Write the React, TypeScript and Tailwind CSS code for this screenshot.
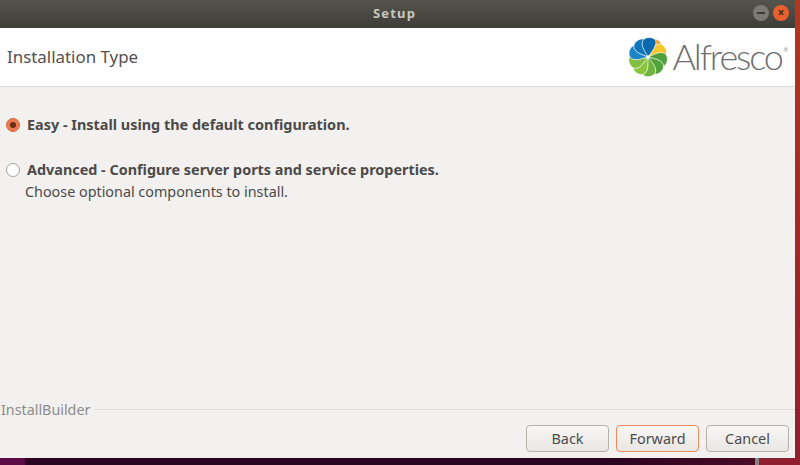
import React from "react"

const petals = [
  { angle: 28, color: "#f39a21" },
  { angle: 62, color: "#f9c52e" },
  { angle: 100, color: "#4f9f3a" },
  { angle: 138, color: "#52a23a" },
  { angle: 176, color: "#6fb43c" },
  { angle: 214, color: "#8cc540" },
  { angle: 250, color: "#82bf3e" },
  { angle: 288, color: "#1a86c8" },
  { angle: 326, color: "#0f76bc" },
  { angle: 364, color: "#0b69ae" },
]

function Flower() {
  return (
    <svg width="42" height="42" viewBox="-21 -21 42 42">
      {petals.map((p) => (
        <path
          key={p.angle}
          d="M0 0C-3 -5 -8 -10 -6.5 -15.5C-5 -20.5 4 -21 6.5 -17C8.5 -13 4 -6 0 0Z"
          fill={p.color}
          stroke="#fff"
          strokeWidth="0.7"
          transform={`rotate(${p.angle})`}
        />
      ))}
      <circle r="1.8" fill="#fff" />
    </svg>
  )
}

function WizardButton({ label, focused }: { label: string; focused?: boolean }) {
  return (
    <button
      className={`h-[27px] w-[83px] rounded-[4px] border bg-gradient-to-b from-[#f8f7f6] to-[#e9e6e3] text-[14.4px] text-[#4c4c4c] ${
        focused ? "border-[#e98a5f]" : "border-[#b5b1ab]"
      }`}
    >
      {label}
    </button>
  )
}

export default function App() {
  return (
    <div className="flex h-[465px] w-[800px] flex-col overflow-hidden bg-[#2c0a24] font-['Noto_Sans',sans-serif]">
      <div className="flex h-[458px] shrink-0">
        <div className="flex w-[795px] shrink-0 flex-col bg-[#f2f1f0]">
          <div className="relative flex h-[28px] shrink-0 items-center justify-center bg-gradient-to-b from-[#55544c] to-[#3e3d38]">
            <span className="mr-[6px] text-[13px] font-bold tracking-[1.2px] text-[#c9c8c0]">Setup</span>
            <div className="absolute right-[6px] top-[5px] flex gap-[4px]">
              <span className="flex h-[16px] w-[16px] items-center justify-center rounded-full bg-[#7b7a73]">
                <span className="h-[1.5px] w-[8px] bg-[#3a3a36]" />
              </span>
              <span className="flex h-[16px] w-[16px] items-center justify-center rounded-full bg-[#e9602f] text-[12px] font-bold leading-none text-[#3a2a20]">
                ×
              </span>
            </div>
          </div>

          <div className="flex h-[59px] shrink-0 items-center justify-between border-b border-[#d9d6da] bg-white pl-[7px] pr-[7px]">
            <h1 className="text-[16.9px] text-[#55504f]">Installation Type</h1>
            <div className="flex items-center gap-[3px]">
              <Flower />
              <span className="mb-[3px] font-['Lato',sans-serif] text-[36px] font-light leading-none tracking-[-2.1px] text-[#6d6e70]">
                Alfresco
              </span>
              <span className="mb-[14px] ml-[-1px] text-[5px] leading-none text-[#8d8e90]">®</span>
            </div>
          </div>

          <div className="flex flex-1 flex-col pl-[6px] pt-[28px] text-[#4c4a48]">
            <label className="flex h-[20px] items-center gap-[7px]">
              <span className="flex h-[14px] w-[14px] items-center justify-center rounded-full border border-[#d9673a] bg-[#ec7a50]">
                <span className="h-[6px] w-[6px] rounded-full bg-[#6a2d18]" />
              </span>
              <span className="text-[14.43px] font-bold">Easy - Install using the default configuration.</span>
            </label>
            <label className="mt-[25px] flex h-[20px] items-center gap-[7px]">
              <span className="h-[14px] w-[14px] rounded-full border border-[#a5a29e] bg-white" />
              <span className="text-[14.4px] font-bold">Advanced - Configure server ports and service properties.</span>
            </label>
            <p className="ml-[19px] mt-[1px] text-[14.35px]">Choose optional components to install.</p>
          </div>

          <div className="flex h-[20px] shrink-0 items-center pl-[1px]">
            <span className="text-[14.3px] text-[#8d8b88]">InstallBuilder</span>
            <span className="mb-[2px] ml-[5px] h-px flex-1 bg-[#dedcdb]" />
          </div>
          <div className="flex h-[38px] shrink-0 justify-end gap-[7px] pb-[6px] pr-[6px] pt-[5px]">
            <WizardButton label="Back" />
            <WizardButton label="Forward" focused />
            <WizardButton label="Cancel" />
          </div>
        </div>
        <div className="flex-1 bg-gradient-to-b from-[#b0381f] via-[#a02a26] to-[#8f1f2e]" />
      </div>
      <div className="flex flex-1">
        <div className="w-[25px] bg-[#5c0a45]" />
        <div className="flex-1 bg-gradient-to-r from-[#2a0420] from-80% to-[#4a0a24]" />
        <div className="w-[4px] bg-[#8a8486]" />
        <div className="w-[41px] bg-[#8f1f2e]" />
      </div>
    </div>
  )
}
